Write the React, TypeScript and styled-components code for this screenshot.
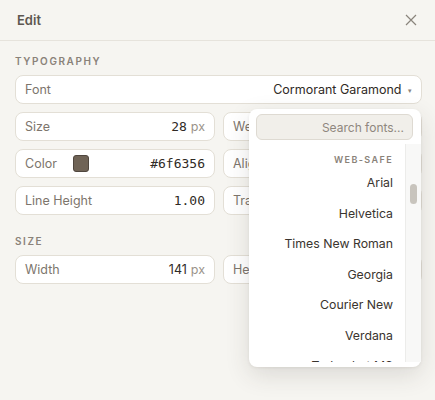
import React from "react";
import styled, { createGlobalStyle } from "styled-components";

const GlobalStyle = createGlobalStyle`
  html, body {
    margin: 0;
    background: #f6f5f1;
    font-family: Inter, "Noto Sans", sans-serif;
  }
`;

const webSafe = [
  "Arial",
  "Helvetica",
  "Times New Roman",
  "Georgia",
  "Courier New",
  "Verdana",
  "Trebuchet MS",
];

function Field(props: { label: string; value?: string; unit?: string; mono?: boolean; swatch?: string }) {
  return (
    <FieldBox>
      <FieldLabel>{props.label}</FieldLabel>
      {props.swatch && <Swatch $color={props.swatch} />}
      <FieldValue $mono={props.mono}>
        {props.value}
        {props.unit && <Unit>{props.unit}</Unit>}
      </FieldValue>
    </FieldBox>
  );
}

function App(): JSX.Element {
  return (
    <Page>
      <GlobalStyle />
      <Header>
        <Title>Edit</Title>
        <svg width="12" height="12" viewBox="0 0 12 12">
          <path d="M1 1L11 11M11 1L1 11" stroke="#8a847c" strokeWidth="1.2" />
        </svg>
      </Header>
      <Body>
        <SectionLabel>Typography</SectionLabel>
        <FontRow>
          <FieldLabel>Font</FieldLabel>
          <FontValue>
            Cormorant Garamond <Caret>▾</Caret>
          </FontValue>
        </FontRow>
        <Grid>
          <Field label="Size" value="28" unit="px" mono />
          <Field label="Weight" />
          <Field label="Color" value="#6f6356" swatch="#6f6356" mono />
          <Field label="Align" />
          <Field label="Line Height" value="1.00" mono />
          <Field label="Transform" />
        </Grid>
        <SectionLabel $top={20}>Size</SectionLabel>
        <Grid>
          <Field label="Width" value="141" unit="px" />
          <Field label="Height" />
        </Grid>

        <Dropdown>
          <Search placeholder="Search fonts..." />
          <ListArea>
            <List>
              <GroupLabel>Web-safe</GroupLabel>
              {webSafe.map((f) => (
                <Item key={f}>{f}</Item>
              ))}
            </List>
            <Track>
              <Thumb />
            </Track>
          </ListArea>
        </Dropdown>
      </Body>
    </Page>
  );
}

const Page = styled.div`
  width: 435px;
  height: 400px;
  overflow: hidden;
`;

const Header = styled.div`
  height: 40px;
  display: flex;
  align-items: center;
  justify-content: space-between;
  padding: 0 18px 0 17px;
  border-bottom: 1px solid #e6e3dc;
`;

const Title = styled.div`
  font-size: 13px;
  font-weight: 600;
  color: #5e5750;
`;

const Body = styled.div`
  position: relative;
  padding: 14px 13px 0 15px;
`;

const SectionLabel = styled.div<{ $top?: number }>`
  margin-top: ${(p) => p.$top || 0}px;
  margin-bottom: 8px;
  font-size: 10px;
  font-weight: 600;
  letter-spacing: 1.6px;
  text-transform: uppercase;
  color: #8a8279;
  line-height: 12px;
`;

const FieldBox = styled.div`
  height: 29px;
  box-sizing: border-box;
  display: flex;
  align-items: center;
  padding: 0 9px;
  background: #fff;
  border: 1px solid #e3dfd6;
  border-radius: 8px;
  overflow: hidden;
  white-space: nowrap;
`;

const FontRow = styled(FieldBox)`
  margin-bottom: 8px;
`;

const FieldLabel = styled.span`
  font-size: 12.5px;
  color: #7d756c;
`;

const FieldValue = styled.span<{ $mono?: boolean }>`
  margin-left: auto;
  font-size: ${(p) => (p.$mono ? "13px" : "12.5px")};
  color: #2f2a25;
  font-family: ${(p) => (p.$mono ? '"DejaVu Sans Mono", monospace' : "inherit")};
`;

const Unit = styled.span`
  margin-left: 4px;
  font-family: Inter, sans-serif;
  font-size: 12.5px;
  color: #9a938a;
`;

const FontValue = styled.span`
  margin-left: auto;
  font-size: 12.5px;
  color: #2f2a25;
`;

const Caret = styled.span`
  font-size: 7px;
  color: #8a847c;
  margin-left: 3px;
  vertical-align: 1px;
`;

const Swatch = styled.span<{ $color: string }>`
  width: 16px;
  height: 17px;
  margin-left: 16px;
  box-sizing: border-box;
  border-radius: 3px;
  background: ${(p) => p.$color};
  border: 1px solid #4f463e;
`;

const Grid = styled.div`
  display: grid;
  grid-template-columns: 200px 1fr;
  column-gap: 8px;
  row-gap: 8px;
`;

const Dropdown = styled.div`
  position: absolute;
  left: 249px;
  top: 68px;
  width: 172px;
  height: 258px;
  box-sizing: border-box;
  padding: 5px 0 5px 7px;
  background: #fff;
  border-radius: 8px;
  box-shadow: 0 8px 24px rgba(60, 50, 40, 0.14), 0 1px 3px rgba(60, 50, 40, 0.08);
  display: flex;
  flex-direction: column;
`;

const Search = styled.input`
  width: 157px;
  height: 26px;
  box-sizing: border-box;
  background: #f1efea;
  border: 1px solid #dedad2;
  border-radius: 6px;
  padding: 0 8px;
  text-align: right;
  font-family: Inter, sans-serif;
  font-size: 12px;
  outline: none;
  &::placeholder {
    color: #8f877e;
  }
`;

const ListArea = styled.div`
  flex: 1;
  display: flex;
  margin-top: 4px;
  overflow: hidden;
`;

const List = styled.div`
  flex: 1;
  padding-right: 12px;
  text-align: right;
  overflow: hidden;
`;

const GroupLabel = styled.div`
  margin-top: 10px;
  margin-bottom: 3px;
  font-size: 9px;
  font-weight: 600;
  letter-spacing: 1.4px;
  text-transform: uppercase;
  color: #8a8279;
  line-height: 11px;
`;

const Item = styled.div`
  height: 30.5px;
  line-height: 30.5px;
  font-size: 12.3px;
  color: #3a342e;
  white-space: nowrap;
`;

const Track = styled.div`
  width: 16px;
  background: #f8f8f7;
  border-left: 1px solid #ececea;
  padding-top: 40px;
  box-sizing: border-box;
  display: flex;
  justify-content: center;
`;

const Thumb = styled.div`
  width: 7px;
  height: 20px;
  border-radius: 4px;
  background: #c8c4bd;
`;

export default App;
